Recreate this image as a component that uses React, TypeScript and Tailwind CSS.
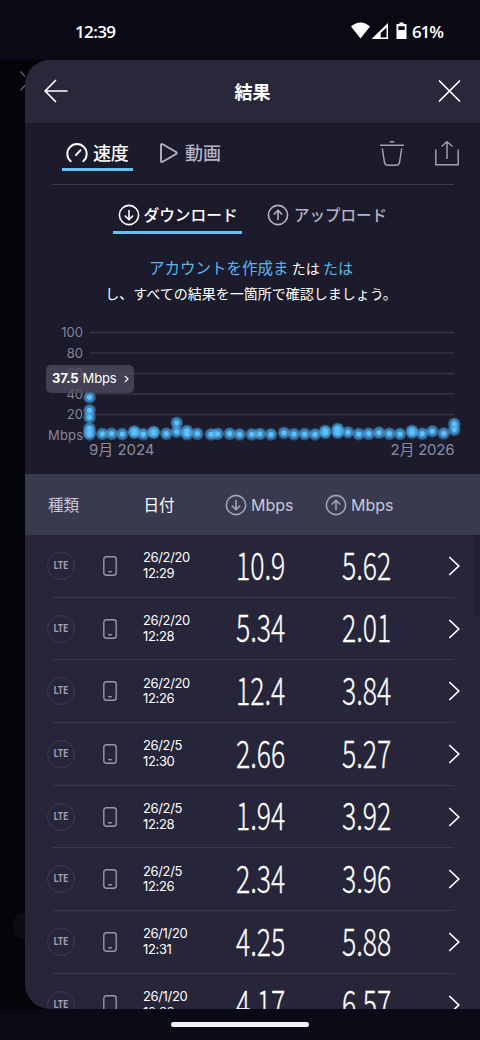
import type { ReactNode } from "react";

const RESULTS = [
  { date: "26/2/20", time: "12:29", down: "10.9", up: "5.62" },
  { date: "26/2/20", time: "12:28", down: "5.34", up: "2.01" },
  { date: "26/2/20", time: "12:26", down: "12.4", up: "3.84" },
  { date: "26/2/5", time: "12:30", down: "2.66", up: "5.27" },
  { date: "26/2/5", time: "12:28", down: "1.94", up: "3.92" },
  { date: "26/2/5", time: "12:26", down: "2.34", up: "3.96" },
  { date: "26/1/20", time: "12:31", down: "4.25", up: "5.88" },
  { date: "26/1/20", time: "12:30", down: "4.17", up: "6.57" },
];

// chart points, in the coordinates of the chart's viewBox
const POINTS: [number, number][] = [
  [64.5, 72], [64.5, 85], [64.5, 92], [64.5, 103], [64.5, 107], [64.5, 109], [77.3, 108.5], [86.7, 108.3],
  [97.3, 108.7], [109.3, 106], [109.3, 107.5], [118.3, 108.8], [128.7, 106.5], [128.7, 107.5], [141.3, 108.3],
  [151.7, 97.5], [151.7, 106.5], [162, 105.5], [162, 108.8], [172.3, 108.3], [186, 109], [192.7, 108.5],
  [204.7, 108.3], [214.7, 109], [226.7, 109], [235, 108.5], [246, 109], [259, 107.5], [269, 108.8],
  [279.7, 108.7], [290, 109], [300.3, 105.5], [300.3, 107.5], [312.7, 103.5], [312.7, 105.5], [312.7, 107.5],
  [323, 107], [333.7, 108.7], [343.7, 108.3], [354, 107.3], [364.3, 108.3], [375, 108.5], [387, 105.5],
  [387, 107.3], [397.3, 108.3], [407.3, 106], [418.7, 108], [429.3, 98.5], [429.3, 104.5],
];

const GRID = [
  { label: "100", y: 7.5 },
  { label: "80", y: 28 },
  { label: "60", y: 48.5 },
  { label: "40", y: 69 },
  { label: "20", y: 89.5 },
];

function CircleArrow({ up = false }: { up?: boolean }) {
  return (
    <svg width="22" height="22" viewBox="0 0 22 22" fill="none" stroke="currentColor" strokeWidth="1.6" className="shrink-0">
      <circle cx="11" cy="11" r="9.6" />
      <path d={up ? "M11 16V6.5M6.8 10.5 11 6.3l4.2 4.2" : "M11 6v9.5M6.8 11.5 11 15.7l4.2-4.2"} />
    </svg>
  );
}

function StatusBar() {
  return (
    <div className="flex h-[60px] items-center justify-between pt-[3px] pr-[37px] pl-[75px] text-white">
      <span className="font-['Open_Sans'] text-[17px] font-semibold tracking-[-0.65px]">12:39</span>
      <div className="flex items-center">
        <svg width="56" height="18" viewBox="0 0 56 18" fill="currentColor" className="-mt-[1px]">
          <path d="M0 4.5Q9.500-3.300 19 4.500L9.500 16.500Z" />
          <path fillRule="evenodd" d="M20.500 17 37 1V17ZM29.700 11V15.500H35.500V5.500Z" />
          <path fillRule="evenodd" d="M48.500 .5h4V2H55.500v15H45.500V2h3ZM47.300 4.200V8h6.400V4.200Z" />
        </svg>
        <span className="ml-[5px] font-['Open_Sans'] text-[17px] font-semibold tracking-[-1px]">61%</span>
      </div>
    </div>
  );
}

function Header() {
  return (
    <header className="flex h-[63px] shrink-0 items-center justify-between bg-[#29273a] pr-[19px] pl-[19px] text-white">
      <svg width="25" height="24" viewBox="0 0 25 24" fill="none" stroke="currentColor" strokeWidth="1.7" strokeLinecap="round" className="-mt-[2px]">
        <path d="M23 12H1.200M11.500 1.500 1.200 12l10.300 10.500" />
      </svg>
      <h1 className="pr-[2px] text-[18px] font-bold">結果</h1>
      <svg width="23" height="24" viewBox="0 0 23 24" fill="none" stroke="currentColor" strokeWidth="1.700" strokeLinecap="round" className="-mt-[2px]">
        <path d="M1.500 2 21.500 22M21.500 2 1.500 22" />
      </svg>
    </header>
  );
}

function Tab({ active = false, className, children }: { active?: boolean; className?: string; children: ReactNode }) {
  return (
    <div
      className={`flex items-center border-b-[3px] ${active ? "border-[#65c0f7] font-medium text-white" : "border-transparent text-[#b4b3c7]"} ${className}`}
    >
      {children}
    </div>
  );
}

function Tabs() {
  return (
    <div className="ml-[27px] flex h-[62px] w-[402px] items-start border-b border-[#3b3b4e]">
      <Tab active className="mt-[14px] ml-[10px] h-[34px] w-[71px] gap-[5px] pl-[4px] text-[18px]">
        <svg width="22" height="20" viewBox="0 0 22 20" fill="none" stroke="currentColor" strokeWidth="1.900" strokeLinecap="round" className="shrink-0">
          <path d="M4.800 18.200A9.700 9.700 0 1 1 17.200 18.200M10 12 14.500 7.200" />
        </svg>
        <span className="shrink-0 tracking-[-0.3px]">速度</span>
      </Tab>
      <Tab className="mt-[14px] ml-[27px] h-[34px] gap-[7px] text-[18px]">
        <svg width="18" height="20" viewBox="0 0 18 20" fill="none" stroke="currentColor" strokeWidth="1.900" strokeLinejoin="round">
          <path d="M1 2.200Q1 .3 2.700 1.300L16 9q1.500 1 0 2L2.700 18.700Q1 19.700 1 17.800Z" />
        </svg>
        <span className="font-medium">動画</span>
      </Tab>
      <div className="mt-[18px] ml-auto flex gap-[31px] text-[#a09fb5]">
        <svg width="24" height="25" viewBox="0 0 24 25" fill="none" stroke="currentColor" strokeWidth="1.500">
          <path d="M0 4.200h24M9.700.8h4.600M2.300 7.500 4.500 21.300Q5 24.200 8 24.200h8q3 0 3.500-2.900L21.700 7.500" />
        </svg>
        <svg width="24" height="25" viewBox="0 0 24 25" fill="none" stroke="currentColor" strokeWidth="1.500" className="-mr-[5px]">
          <path d="M.8 8.500v15.300h22.400V8.500M12 18V1M6.500 5.500 12 .8l5.500 4.700" />
        </svg>
      </div>
    </div>
  );
}

function Chart() {
  return (
    <div className="relative mt-[19px] h-[149px]">
      <svg width="455" height="149" viewBox="0 0 455 149" className="font-['Inter','Noto_Sans_CJK_JP',sans-serif]">
        <g stroke="#343447" strokeWidth="1.300">
          {GRID.map((g) => (
            <line key={g.label} x1="65" x2="429" y1={g.y} y2={g.y} />
          ))}
        </g>
        <g fill="#85849a" fontSize="13" textAnchor="end">
          {GRID.map((g) => (
            <text key={g.label} x="58" y={g.y + 4.5}>{g.label}</text>
          ))}
          <text x="58" y="114.500" textLength="35">Mbps</text>
        </g>
        <g fill="#4aabed" fillOpacity=".38">
          {POINTS.map(([x, y], i) => (
            <circle key={i} cx={x} cy={y + 0.3} r="6.400" />
          ))}
        </g>
        <g fill="#4eabed" fillOpacity=".55">
          {POINTS.map(([x, y], i) => (
            <circle key={i} cx={x} cy={y + 0.3} r="5" />
          ))}
        </g>
        <g fill="#5dc0ff">
          {POINTS.map(([x, y], i) => (
            <circle key={i} cx={x} cy={y + 0.3} r="2.600" />
          ))}
        </g>
        <g fill="#8c8ba0" fontSize="15">
          <text x="64" y="130" textLength="65.500">9月 2024</text>
          <text x="365.500" y="130" textLength="64">2月 2026</text>
        </g>
      </svg>
      <div className="absolute top-[40px] left-[21px] flex h-[28px] w-[88px] items-center rounded-[5px] bg-[#4c4b5e]/80 pl-[6px] font-['Inter'] text-[13px] tracking-[-0.1px] whitespace-nowrap text-white">
        <b>37.5</b>
        <span className="ml-[4px]">Mbps</span>
        <svg width="5" height="8" viewBox="0 0 5 8" fill="none" stroke="currentColor" strokeWidth="1.200" className="ml-[7px]">
          <path d="m.8.800 3.200 3.200-3.200 3.200" />
        </svg>
      </div>
    </div>
  );
}

function Speed({ value }: { value: string }) {
  return (
    <span className="block w-[106px] shrink-0 pb-[6px] text-[38.500px] leading-none font-light">
      <span className="inline-block origin-left scale-x-[0.69] [-webkit-text-stroke:0.300px_currentColor]">{value}</span>
    </span>
  );
}

function ResultRow({ date, time, down, up }: (typeof RESULTS)[number]) {
  return (
    <div className="ml-[27px] flex h-[62.700px] w-[402px] shrink-0 items-center border-b border-[#3a384d] text-white">
      <span className="-ml-[5px] flex size-[28px] shrink-0 items-center justify-center rounded-full border border-[#3d3b50] font-['Roboto'] text-[10.500px] font-bold text-[#a3a1b8]">
        <span className="scale-x-[0.82] tracking-[0.4px]">LTE</span>
      </span>
      <svg width="14" height="20" viewBox="0 0 14 20" fill="none" stroke="#9997ae" strokeWidth="1.400" className="ml-[28px] shrink-0">
        <rect x=".8" y=".8" width="12.400" height="18.400" rx="2.500" />
        <path d="M5.200 15.700h3.600" />
      </svg>
      <div className="ml-[26px] w-[93px] shrink-0 font-['Inter'] text-[13px] leading-[15.600px] tracking-[-0.35px]">
        <div>{date}</div>
        <div>{time}</div>
      </div>
      <Speed value={down} />
      <Speed value={up} />
      <svg width="12" height="20" viewBox="0 0 12 20" fill="none" stroke="currentColor" strokeWidth="1.700" strokeLinecap="round" className="shrink-0">
        <path d="m1.800 1.500 9 8.500-9 8.500" />
      </svg>
    </div>
  );
}

export default function App() {
  return (
    <div className="h-[1040px] w-[480px] overflow-hidden bg-[#0a0a17] font-['Noto_Sans_CJK_JP',sans-serif]">
      <StatusBar />
      <div className="flex h-[949px] bg-[#040509]">
        {/* the screen underneath, peeking out beside the sheet */}
        <div className="flex w-[25px] shrink-0 flex-col items-end">
          <svg width="5" height="20" viewBox="0 0 5 20" fill="none" stroke="#64646a" strokeWidth="1.200" className="mt-[11px]">
            <path d="m.5.500 4.500 5M.5 19.500l4.500-5" />
          </svg>
          <div className="mt-[822px] h-[26px] w-[12px] rounded-l-[10px] bg-[#0c0c11]" />
        </div>

        <main className="flex w-[455px] flex-col overflow-hidden rounded-l-[25px] bg-[#27253a]">
          <Header />
          <section className="h-[351px] shrink-0 bg-[#1b1b2b]">
            <Tabs />
            <div className="flex h-[49px] pt-[14px] pl-[88px]">
              <Tab active className="h-[35px] w-[129px] gap-[4px] pl-[4.500px] text-[15.700px] whitespace-nowrap">
                <CircleArrow />
                <span>ダウンロード</span>
              </Tab>
              <Tab className="ml-[25px] h-[35px] gap-[5px] text-[15.500px] font-medium whitespace-nowrap">
                <CircleArrow up />
                <span>アップロード</span>
              </Tab>
            </div>
            <p className="mt-[21px] pr-[3px] text-center text-[14px] leading-[25px] text-white">
              <span className="text-[15.500px] text-[#5cb6ec]">アカウントを作成ま</span> たは{" "}
              <span className="text-[15px] text-[#5cb6ec]">たは</span>
              <br />
              し、すべての結果を一箇所で確認しましょう。
            </p>
            <Chart />
          </section>

          <div className="flex h-[61px] shrink-0 items-center bg-[#383a50] pl-[23px] text-[15.500px] text-[#c8c7d8]">
            <span className="w-[95.500px]">種類</span>
            <span className="w-[81px] text-white">日付</span>
            <span className="flex w-[100px] items-center gap-[4.500px] font-['Inter'] text-[16px]">
              <span className="text-[#a3a2b8]">
                <CircleArrow />
              </span>
              Mbps
            </span>
            <span className="flex items-center gap-[4.500px] font-['Inter'] text-[16px]">
              <span className="text-[#a3a2b8]">
                <CircleArrow up />
              </span>
              Mbps
            </span>
          </div>

          <div className="relative flex flex-1 flex-col overflow-hidden">
            {RESULTS.map((r) => (
              <ResultRow key={`${r.date} ${r.time}`} {...r} />
            ))}
            <div className="absolute top-0 right-0 h-[81px] w-[6px] bg-[#201e31]" />
          </div>
        </main>
      </div>
      <div className="mx-auto mt-[13px] h-[5px] w-[138px] rounded-full bg-[#f0f0f5]" />
    </div>
  );
}
